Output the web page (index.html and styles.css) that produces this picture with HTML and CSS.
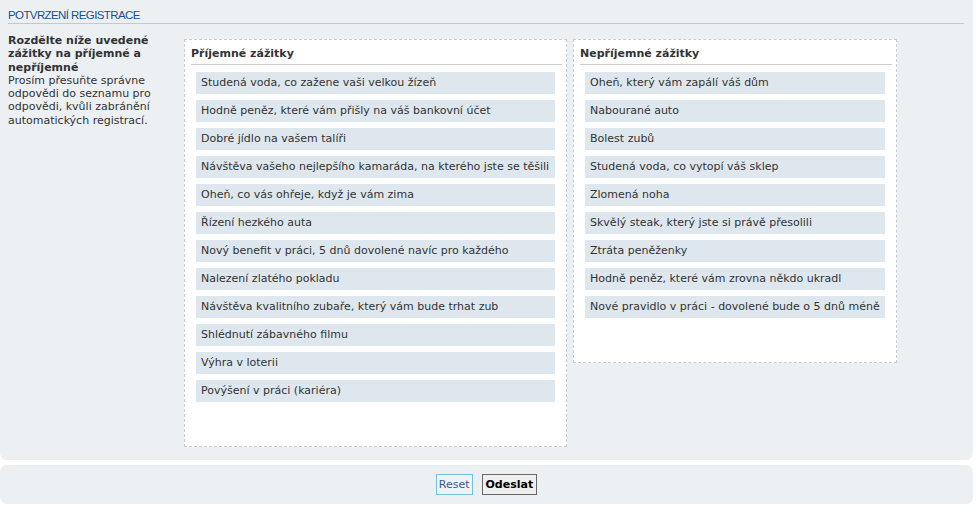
FILE: index.html
```html
<!DOCTYPE html>
<html lang="cs">
<head>
    <meta charset="UTF-8">
    <title>Potvrzení registrace</title>
    <link rel="stylesheet" href="styles.css">
</head>
<body>
    <form id="confirmForm">
        <div class="panel main-panel">
            <h3>Potvrzení registrace</h3>
            <div class="sort-row">
                <div class="explain">
                    <strong>Rozdělte níže uvedené zážitky na příjemné a nepříjemné</strong>
                    <span>Prosím přesuňte správne odpovědi do seznamu pro odpovědi, kvůli zabránění automatických registrací.</span>
                </div>
                <div class="sort-box box-left">
                    <h4>Příjemné zážitky</h4>
                    <ul class="sort-list">
                        <li>Studená voda, co zažene vaši velkou žízeň</li>
                        <li>Hodně peněz, které vám přišly na váš bankovní účet</li>
                        <li>Dobré jídlo na vašem talíři</li>
                        <li>Návštěva vašeho nejlepšího kamaráda, na kterého jste se těšili</li>
                        <li>Oheň, co vás ohřeje, když je vám zima</li>
                        <li>Řízení hezkého auta</li>
                        <li>Nový benefit v práci, 5 dnů dovolené navíc pro každého</li>
                        <li>Nalezení zlatého pokladu</li>
                        <li>Návštěva kvalitního zubaře, který vám bude trhat zub</li>
                        <li>Shlédnutí zábavného filmu</li>
                        <li>Výhra v loterii</li>
                        <li>Povýšení v práci (kariéra)</li>
                    </ul>
                </div>
                <div class="sort-box box-right">
                    <h4>Nepříjemné zážitky</h4>
                    <ul class="sort-list">
                        <li>Oheň, který vám zapálí váš dům</li>
                        <li>Nabourané auto</li>
                        <li>Bolest zubů</li>
                        <li>Studená voda, co vytopí váš sklep</li>
                        <li>Zlomená noha</li>
                        <li>Skvělý steak, který jste si právě přesolili</li>
                        <li>Ztráta peněženky</li>
                        <li>Hodně peněz, které vám zrovna někdo ukradl</li>
                        <li>Nové pravidlo v práci - dovolené bude o 5 dnů méně</li>
                    </ul>
                </div>
            </div>
        </div>
        <div class="panel button-panel">
            <button type="reset" class="btn btn-reset">Reset</button>
            <button type="submit" class="btn btn-submit">Odeslat</button>
        </div>
    </form>
</body>
</html>
```

FILE: styles.css
```css
body {
    margin: 0;
    background: #fff;
    font-family: "DejaVu Sans", Verdana, sans-serif;
    font-size: 11px;
    color: #333;
}
form {
    width: 973px;
}
.panel {
    background-color: #ecf0f3;
    border-radius: 7px;
}
.main-panel {
    border-radius: 0 0 7px 7px;
    padding: 9px 9px 14px 8px;
    height: 437px;
}
h3 {
    margin: 0;
    font-family: "Liberation Sans", Arial, sans-serif;
    font-size: 11.5px;
    font-weight: normal;
    letter-spacing: -0.6px;
    text-transform: uppercase;
    color: #115098;
    padding-bottom: 2px;
    border-bottom: 1px solid #c4c8cc;
}
.sort-row {
    display: flex;
    align-items: flex-start;
    gap: 6px;
    margin-top: 10px;
}
.explain {
    width: 170px;
    line-height: 13.3px;
}
.explain strong,
.explain span {
    display: block;
}
.sort-box {
    background: #fff;
    border: 1px dashed #c8cdd2;
    margin-top: 5px;
}
.box-left {
    width: 381px;
}
.box-right {
    width: 322px;
}
h4 {
    margin: 0 4px 0 6px;
    padding: 7px 0 4px;
    font-size: 11px;
    color: #333;
    border-bottom: 1px solid #ccc;
}
.sort-list {
    list-style: none;
    margin: 0;
    padding: 7px 11px 44px 11px;
    display: flex;
    flex-direction: column;
    gap: 6px;
}
.sort-list li {
    background-color: #dee7ee;
    height: 22px;
    line-height: 22px;
    padding: 0 5px;
    white-space: nowrap;
    overflow: hidden;
}
.button-panel {
    margin-top: 5px;
    height: 39px;
    display: flex;
    justify-content: center;
    align-items: center;
    gap: 9px;
}
.btn {
    font-family: "DejaVu Sans", Verdana, sans-serif;
    font-size: 11px;
    height: 21px;
    padding: 0 3px;
    background-color: #efefef;
    cursor: pointer;
}
.btn-reset {
    padding: 0 2px;
    color: #3c5a86;
    border: 1px solid #76bfe0;
    background-color: #eef3f7;
}
.btn-submit {
    font-weight: bold;
    color: #000;
    border: 1px solid #666;
}
```
